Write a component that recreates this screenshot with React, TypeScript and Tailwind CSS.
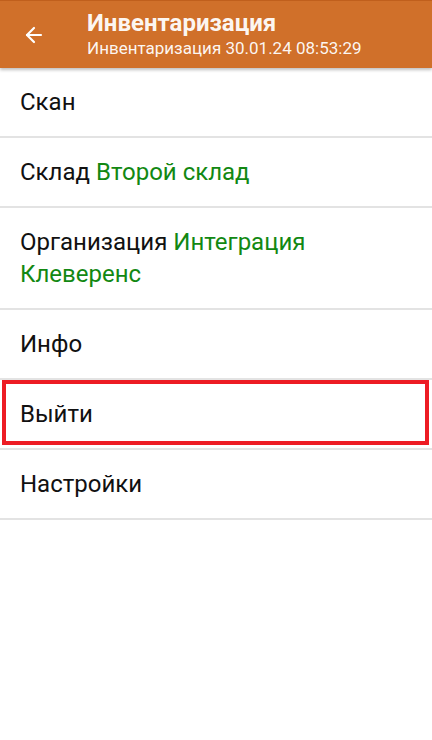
import { ArrowLeft } from 'lucide-react';

const rows = [
    { label: 'Скан', value: '' },
    { label: 'Склад', value: 'Второй склад' },
    { label: 'Организация', value: 'Интеграция Клеверенс', tall: true },
    { label: 'Инфо', value: '' },
    { label: 'Выйти', value: '', highlight: true },
    { label: 'Настройки', value: '' },
];

export default function App() {
    return (
        <div className="w-[432px] h-[740px] bg-white font-['Roboto',sans-serif]">
            <header className="h-[68px] bg-[#d0702a] border-t border-[#c05f1c] flex items-center shadow-[0_2px_3px_rgba(0,0,0,0.25)] relative z-10">
                <div className="w-[87px] flex justify-center pr-[19px]">
                    <ArrowLeft className="w-6 h-6 text-white" strokeWidth={2.2} />
                </div>
                <div className="flex flex-col text-white/95 -mt-[2px]">
                    <h1 className="text-[24px] leading-[28px] font-bold">Инвентаризация</h1>
                    <p className="text-[17px] leading-[22px]">Инвентаризация 30.01.24 08:53:29</p>
                </div>
            </header>
            <ul>
                {rows.map((row) => (
                    <li
                        key={row.label}
                        className={`relative min-h-[70px] flex items-center pl-5 pr-4 border-b-2 border-[#e3e3e3] text-[24px] leading-[32px] text-[#111] ${row.tall ? 'py-[18px]' : 'py-[17px]'}`}
                    >
                        <p>
                            {row.label}
                            {row.value && <span className="text-[#128812]"> {row.value}</span>}
                        </p>
                        {row.highlight && (
                            <div className="absolute top-0 left-[2px] right-[3px] bottom-[3px] border-4 border-[#ed1c24]" />
                        )}
                    </li>
                ))}
            </ul>
        </div>
    );
}
